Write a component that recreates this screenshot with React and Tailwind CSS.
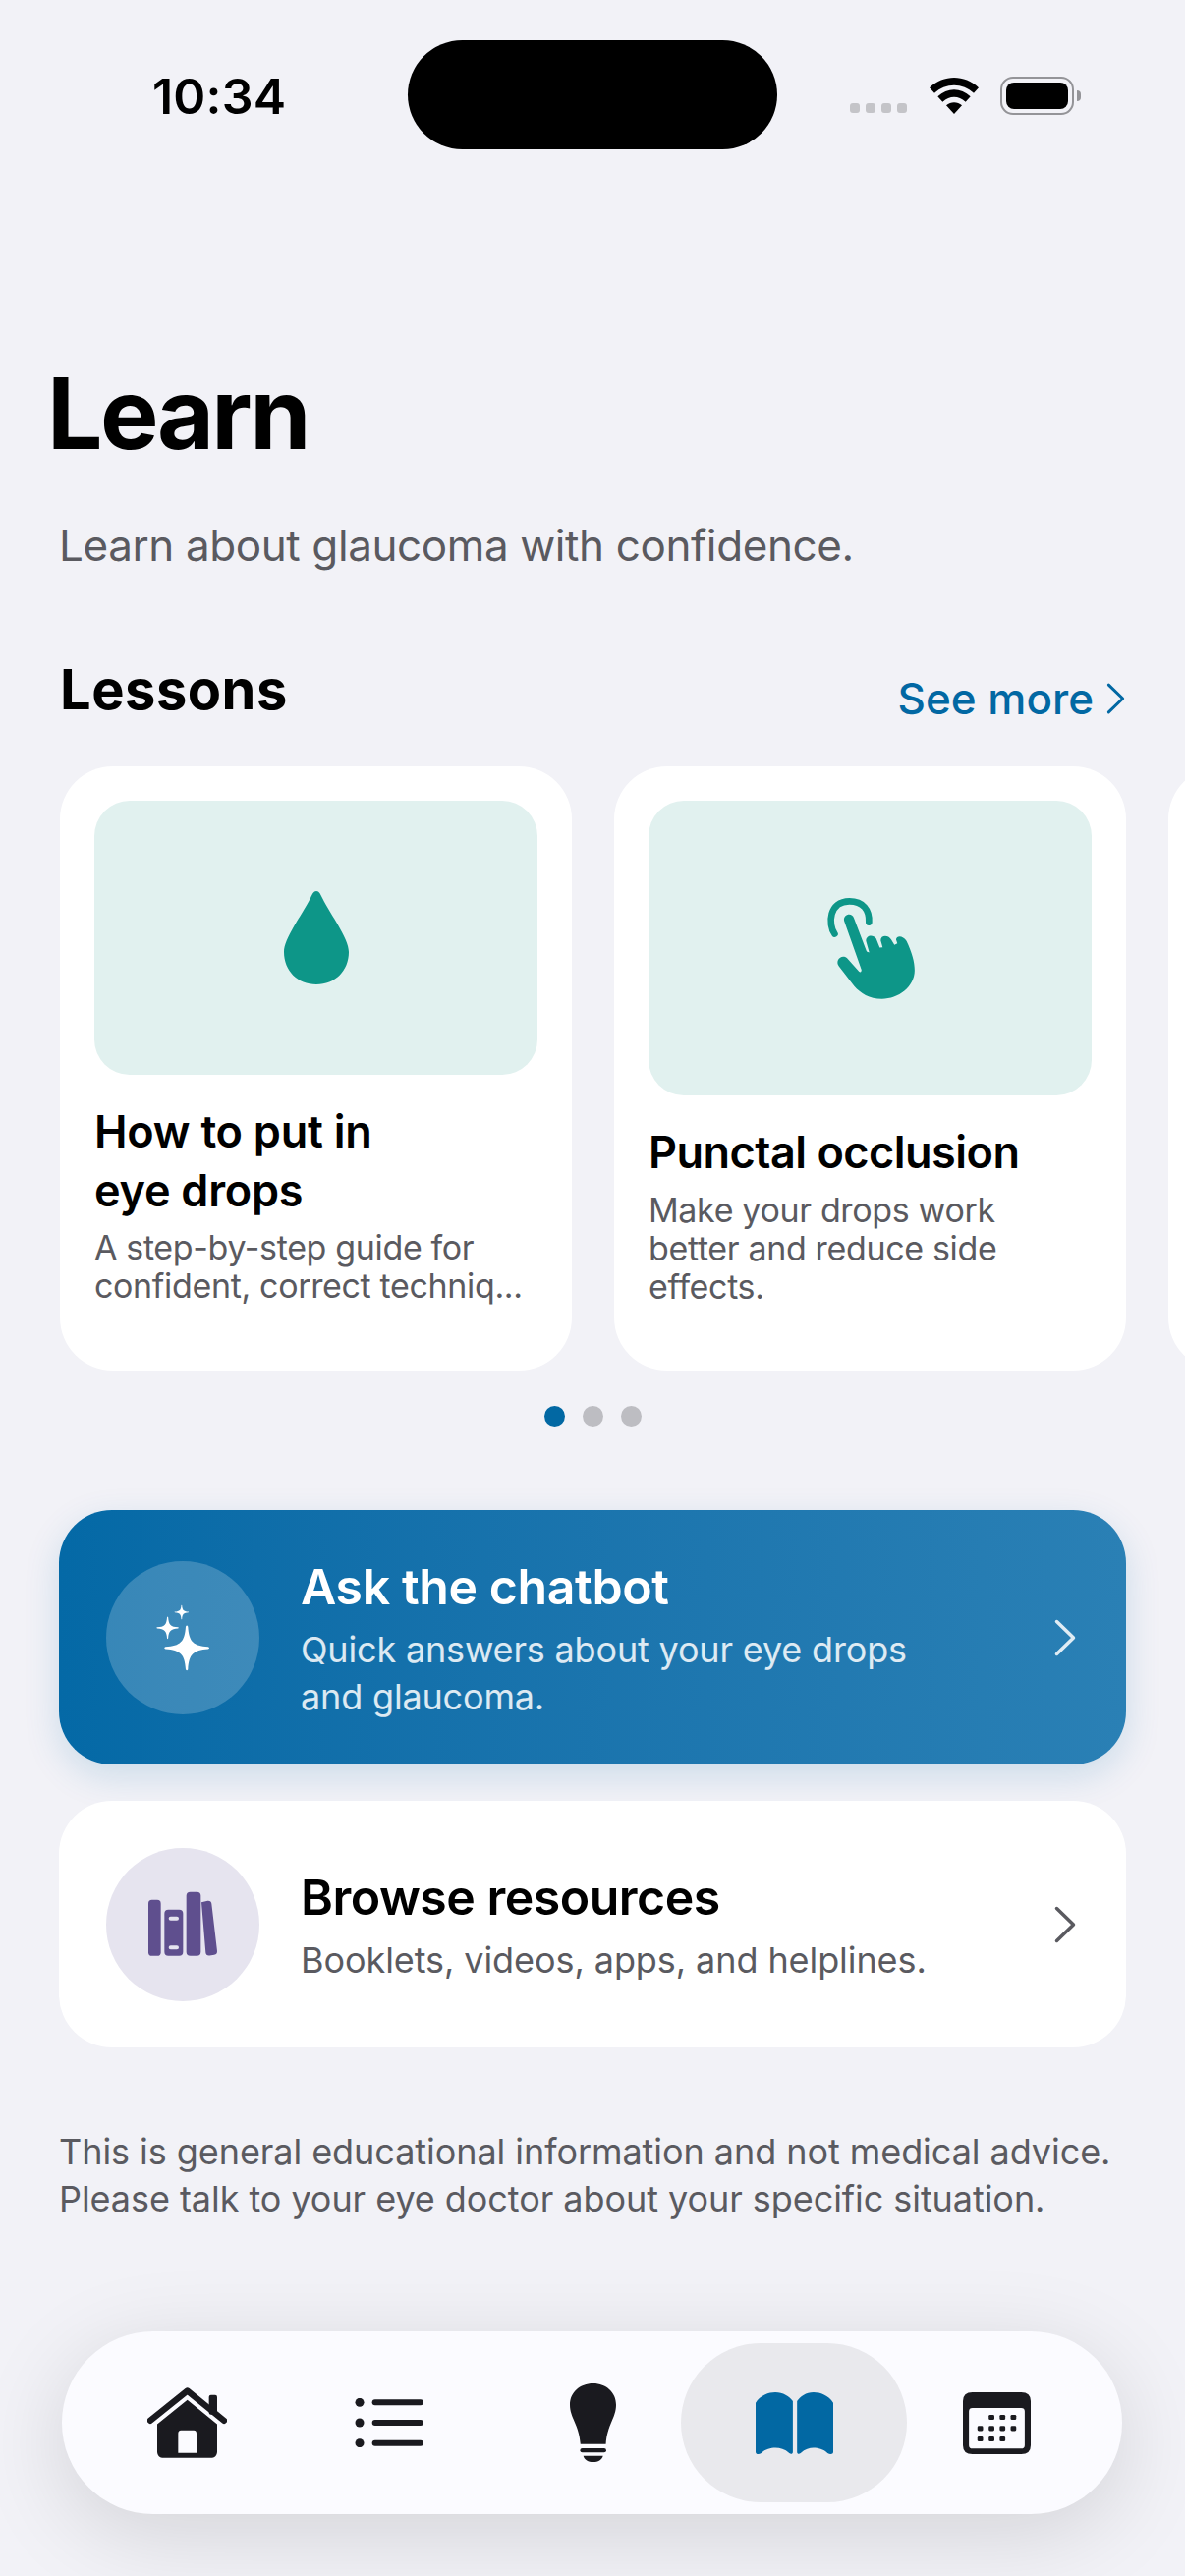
import React from 'react';

const Chevron = ({ className }) => (
  <svg viewBox="0 0 22 38" fill="none" className={className}>
    <path d="M2.5 2.5 L19.5 19 L2.5 35.5" stroke="currentColor" strokeWidth="3.5" strokeLinecap="round" strokeLinejoin="round" />
  </svg>
);

function star(cx, cy, r) {
  const t = r * 0.14;
  const w = r * 0.05;
  return `M${cx - w} ${cy - r + w} Q${cx} ${cy - r - w} ${cx + w} ${cy - r + w} C${cx + t * 0.7} ${cy - t * 2} ${cx + t * 2} ${cy - t * 0.7} ${cx + r - w} ${cy - w} Q${cx + r + w} ${cy} ${cx + r - w} ${cy + w} C${cx + t * 2} ${cy + t * 0.7} ${cx + t * 0.7} ${cy + t * 2} ${cx + w} ${cy + r - w} Q${cx} ${cy + r + w} ${cx - w} ${cy + r - w} C${cx - t * 0.7} ${cy + t * 2} ${cx - t * 2} ${cy + t * 0.7} ${cx - r + w} ${cy + w} Q${cx - r - w} ${cy} ${cx - r + w} ${cy - w} C${cx - t * 2} ${cy - t * 0.7} ${cx - t * 0.7} ${cy - t * 2} ${cx - w} ${cy - r + w} Z`;
}

const Sparkles = () => (
  <svg viewBox="200 190 175 205" className="w-[58px] h-[68px]" fill="#fff">
    <path d={star(300, 324, 69)} />
    <path d={star(241, 262, 34)} />
    <path d={star(284, 214, 22)} />
  </svg>
);

const Books = () => (
  <svg viewBox="180 198 216 200" className="w-[72px] h-[67px]" fill="#5F4F8E">
    <rect x="183" y="224" width="38" height="171" rx="11" />
    <path
      fillRule="evenodd"
      d="M244 254 H277 Q289 254 289 266 V383 Q289 395 277 395 H244 Q232 395 232 383 V266 Q232 254 244 254 Z M251 275 Q245 275 245 281 Q245 287 251 287 H270 Q276 287 276 281 Q276 275 270 275 Z M251 363 Q245 363 245 369 Q245 375 251 375 H270 Q276 375 276 369 Q276 363 270 363 Z"
    />
    <rect x="299" y="200" width="44" height="195" rx="12" />
    <path d="M345 231 L364 227 Q375 226 376 236 L393 380 Q394 390 384 392 L370 394 Q359 395 358 385 Z" />
  </svg>
);

const Drop = () => (
  <svg viewBox="0 0 66 95" className="w-[66px] h-[95px]" fill="#0D9688">
    <path d="M33 0 C36 0 37 3 39 7 C48 25 66 48 66 62 C66 81 52 95 33 95 C14 95 0 81 0 62 C0 48 18 25 27 7 C29 3 30 0 33 0 Z" />
  </svg>
);

const Hand = () => (
  <svg viewBox="180 158 270 310" className="w-[90px] h-[103px]">
    <path d="M205 268 C184 238 188 168 250 168 C292 168 312 195 310 232" fill="none" stroke="#0D9688" strokeWidth="20" strokeLinecap="round" />
    <path
      fill="#0D9688"
      d="M234 228 C230 208 258 200 264 220 L303 322 L311 325 L301 290 C300 272 322 268 332 282 L343 310 L352 309 L346 288 C346 272 368 270 378 285 L388 302 L397 297 L393 285 C395 272 415 273 425 290 C442 325 450 355 450 380 C450 430 400 467 350 467 C310 467 285 450 265 428 L218 367 C205 350 225 328 243 342 L280 384 C285 388 288 382 287 378 Z"
    />
  </svg>
);

const Home = () => (
  <svg viewBox="90 150 243 215" className="w-[81px] h-[72px]" fill="#1A1A1F">
    <rect x="278" y="173" width="25" height="60" rx="6" />
    <path d="M99 251 L212 160 L324 251" fill="none" stroke="#1A1A1F" strokeWidth="19" strokeLinecap="round" strokeLinejoin="round" />
    <path
      fillRule="evenodd"
      d="M120 262 L212 188 L303 262 V345 C303 358 295 365 283 365 H140 C128 365 120 358 120 345 Z M184 350 H240 V290 C240 284 237 281 232 281 H192 C188 281 184 284 184 290 Z"
    />
  </svg>
);

const ListIcon = () => (
  <svg viewBox="725 182 210 150" className="w-[70px] h-[50px]" fill="#1A1A1F">
    {[195, 257, 319].map((y) => (
      <g key={y}>
        <circle cx="740" cy={y} r="13.5" />
        <rect x="778" y={y - 9} width="157" height="18" rx="9" />
      </g>
    ))}
  </svg>
);

const Bulb = () => (
  <svg viewBox="112 135 131 240" preserveAspectRatio="none" className="w-[47px] h-[80px] ml-[3px]" fill="#1A1A1F">
    <path d="M178 135 C140 135 112 163 112 200 C112 240 138 260 142 320 H214 C218 260 243 240 243 200 C243 163 215 135 178 135 Z" />
    <rect x="141" y="333" width="74" height="13" rx="6" />
    <path d="M150 356 H206 C203 368 192 375 178 375 C164 375 153 368 150 356 Z" />
  </svg>
);

const Book = () => (
  <svg viewBox="642 163 221 187" preserveAspectRatio="none" className="w-[79px] h-[63px]" fill="#0268A3">
    <path d="M642 195 C655 172 680 163 698 163 C720 163 738 175 748 190 V343 C748 350 742 350 738 347 C725 335 712 331 698 331 C685 331 670 335 658 347 C650 352 642 350 642 343 Z" />
    <path d="M863 195 C850 172 825 163 807 163 C785 163 770 175 760 190 V343 C760 350 766 350 770 347 C783 335 795 331 807 331 C820 331 835 335 847 347 C855 352 863 350 863 343 Z" />
  </svg>
);

const CalendarIcon = () => {
  const dots = [
    [1316, 238], [1347, 238], [1378, 238],
    [1284, 272], [1316, 272], [1347, 272], [1378, 272],
    [1284, 304], [1316, 304], [1347, 304],
  ];
  return (
    <svg viewBox="1235 162 192 188" preserveAspectRatio="none" className="w-[69px] h-[63px]" fill="#1A1A1F">
      <path
        fillRule="evenodd"
        d="M1262 162 H1400 Q1427 162 1427 189 V323 Q1427 350 1400 350 H1262 Q1235 350 1235 323 V189 Q1235 162 1262 162 Z M1262 210 Q1252 210 1252 220 V323 Q1252 333 1262 333 H1400 Q1410 333 1410 323 V220 Q1410 210 1400 210 Z"
      />
      {dots.map(([x, y]) => (
        <rect key={`${x}-${y}`} x={x - 8} y={y - 7.5} width="16" height="15" rx="4" />
      ))}
    </svg>
  );
};

const Wifi = () => (
  <svg viewBox="497 117 150 111" className="w-[50px] h-[37px]" fill="#000">
    <path d="M497 148 C540 107 604 107 647 148 L632 164 C598 132 546 132 512 164 Z" />
    <path d="M522 175 C552 147 592 147 622 175 L607 191 C585 171 559 171 537 191 Z" />
    <path d="M548 202 C562 190 582 190 596 202 L572 228 Z" />
  </svg>
);

export default function App() {
  return (
    <div className="w-[1206px] h-[2622px] overflow-hidden bg-[#F2F2F7] font-['Inter',sans-serif] flex flex-col">
      {/* status bar */}
      <div className="flex items-start h-[152px] pt-[41px] flex-none">
        <div className="w-[415px] pl-[155px] pt-[29px] text-[50px] leading-[56px] font-semibold text-black tracking-[0.2px]">10:34</div>
        <div className="w-[376px] h-[111px] rounded-full bg-black flex-none"></div>
        <div className="flex-1 flex items-center h-[76px] pl-[74px] pt-[36px]">
          <div className="flex gap-[6px] mt-[26px]">
            {[0, 1, 2, 3].map((i) => (
              <div key={i} className="w-[10px] h-[10px] rounded-[3px] bg-[#C4C4C8]"></div>
            ))}
          </div>
          <div className="ml-[23px]">
            <Wifi />
          </div>
          <div className="ml-[22px] flex items-center">
            <div className="w-[75px] h-[39px] rounded-[13px] border-2 border-[#949498] p-[4px]">
              <div className="w-full h-full rounded-[8px] bg-black"></div>
            </div>
            <div className="ml-[3px] w-[4px] h-[11px] rounded-r-full bg-[#949498]"></div>
          </div>
        </div>
      </div>

      <h1 className="mt-[209px] pl-[48px] text-[100px] leading-[120px] font-bold text-black tracking-[-2.6px]">Learn</h1>
      <p className="mt-[46px] pl-[60px] text-[44px] leading-[56px] text-[#5A5A60] tracking-[-0.4px]">Learn about glaucoma with confidence.</p>

      <div className="mt-[85px] pl-[61px] pr-[61px] flex justify-between items-start h-[112px]">
        <h2 className="text-[56px] leading-[68px] font-bold text-black tracking-[0.5px]">Lessons</h2>
        <button className="flex items-center gap-[13px] text-[#0268A3] text-[44px] leading-[56px] font-medium mt-[15px]">
          See more
          <Chevron className="w-[19px] h-[32px]" />
        </button>
      </div>

      {/* lessons carousel */}
      <div className="flex gap-[43px] pl-[61px] flex-none overflow-hidden">
        <div className="w-[521px] h-[615px] flex-none rounded-[54px] bg-white p-[35px]">
          <div className="h-[279px] rounded-[36px] bg-[#E1F1EF] flex items-center justify-center">
            <Drop />
          </div>
          <h3 className="mt-[28px] text-[45px] leading-[60px] font-semibold text-black tracking-[-0.25px]">How to put in<br />eye drops</h3>
          <p className="mt-[8px] text-[34px] leading-[39px] text-[#5A5A60] whitespace-nowrap tracking-[-0.35px]">A step-by-step guide for<br />confident, correct techniq...</p>
        </div>
        <div className="w-[521px] h-[615px] flex-none rounded-[54px] bg-white p-[35px]">
          <div className="h-[300px] rounded-[36px] bg-[#E1F1EF] flex items-center justify-center">
            <Hand />
          </div>
          <h3 className="mt-[28px] text-[45px] leading-[60px] font-semibold text-black tracking-[-0.5px]">Punctal occlusion</h3>
          <p className="mt-[9px] text-[34px] leading-[39px] text-[#5A5A60] whitespace-nowrap tracking-[-0.35px]">Make your drops work<br />better and reduce side<br />effects.</p>
        </div>
        <div className="w-[521px] h-[615px] flex-none rounded-[54px] bg-white"></div>
      </div>

      <div className="mt-[36px] flex justify-center gap-[18px]">
        <div className="w-[21px] h-[21px] rounded-full bg-[#0268A3]"></div>
        <div className="w-[21px] h-[21px] rounded-full bg-[#BDBDC2]"></div>
        <div className="w-[21px] h-[21px] rounded-full bg-[#BDBDC2]"></div>
      </div>

      {/* chatbot */}
      <div className="mt-[85px] mx-[60px] h-[259px] flex-none rounded-[54px] bg-gradient-to-r from-[#0469A6] to-[#2A80B5] shadow-[0_12px_36px_rgba(4,105,166,0.16)] flex items-center pl-[48px] pr-[51px]">
        <div className="w-[156px] h-[156px] flex-none rounded-full bg-white/20 flex items-center justify-center">
          <Sparkles />
        </div>
        <div className="ml-[42px] flex-1">
          <div className="text-[50px] leading-[64px] font-semibold text-white tracking-[-0.4px]">Ask the chatbot</div>
          <div className="mt-[8px] text-[36px] leading-[48px] text-white/85 tracking-[-0.17px]">Quick answers about your eye drops<br />and glaucoma.</div>
        </div>
        <Chevron className="w-[22px] h-[38px] text-white/85" />
      </div>

      {/* resources */}
      <div className="mt-[37px] mx-[60px] h-[251px] flex-none rounded-[54px] bg-white flex items-center pl-[48px] pr-[51px]">
        <div className="w-[156px] h-[156px] flex-none rounded-full bg-[#E6E4EF] flex items-center justify-center">
          <Books />
        </div>
        <div className="ml-[42px] flex-1">
          <div className="text-[50px] leading-[64px] font-semibold text-black tracking-[-0.5px]">Browse resources</div>
          <div className="mt-[8px] text-[36px] leading-[48px] text-[#5A5A60] tracking-[-0.08px]">Booklets, videos, apps, and helplines.</div>
        </div>
        <Chevron className="w-[22px] h-[38px] text-[#5A5A60]" />
      </div>

      <p className="mt-[83px] pl-[60px] text-[36px] leading-[47.5px] text-[#5A5A60] whitespace-nowrap tracking-[-0.06px]">
        This is general educational information and not medical advice.<br />
        Please talk to your eye doctor about your specific situation.
      </p>

      {/* tab bar */}
      <div className="mt-[111px] ml-[63px] w-[1079px] h-[186px] flex-none rounded-full bg-[#FBFBFF] shadow-[0_20px_90px_rgba(0,0,0,0.13)] flex items-center pl-[24px]">
        <div className="w-[206px] flex justify-center"><Home /></div>
        <div className="w-[206px] flex justify-center"><ListIcon /></div>
        <div className="w-[206px] flex justify-center"><Bulb /></div>
        <div className="w-[230px] h-[162px] mx-[-12px] rounded-full bg-[#E9E9ED] flex items-center justify-center"><Book /></div>
        <div className="w-[206px] flex justify-center"><CalendarIcon /></div>
      </div>
    </div>
  );
}
